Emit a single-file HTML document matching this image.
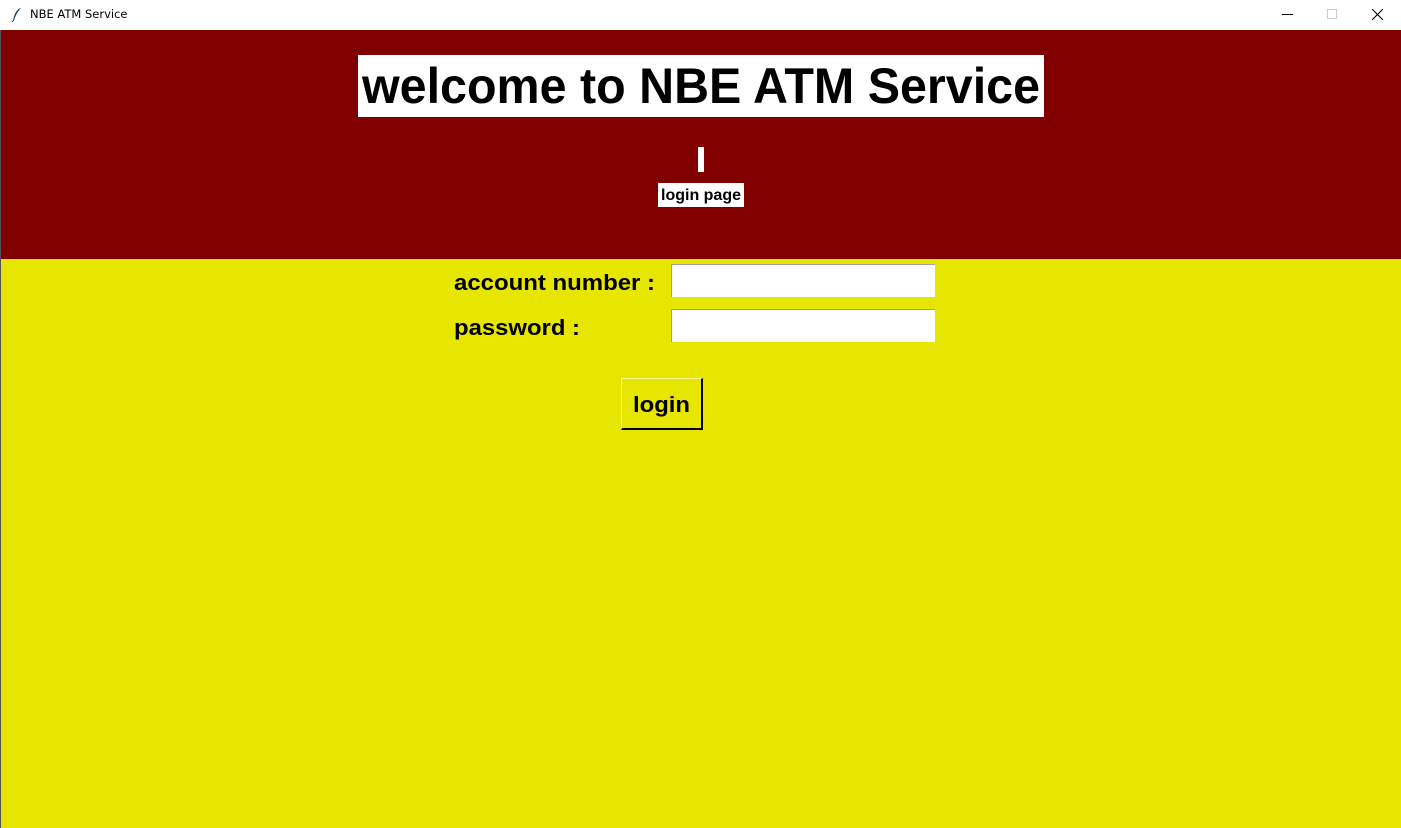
<!DOCTYPE html>
<html><head><meta charset="utf-8"><style>
*{margin:0;padding:0;box-sizing:border-box}
body{width:1401px;height:828px;overflow:hidden;background:#fff;font-family:"Liberation Sans",Arial,sans-serif;position:relative}
.abs{position:absolute}
</style></head><body>
<div class="abs" style="left:0;top:0;width:1401px;height:30px;background:#fff"></div>
<svg class="abs" style="left:11px;top:7px" width="12" height="16" viewBox="0 0 12 16"><path d="M10 1 C6 2 3 7 2 14 L3 14 C4 9 7 4 10 1Z" fill="#1a3a6a"/><path d="M2 14 L1 15" stroke="#333"/></svg>
<div class="abs" style="left:30px;top:7px;color:#000;font-family:'DejaVu Sans','Liberation Sans',sans-serif;font-size:11.5px">NBE ATM Service</div>
<div class="abs" style="left:1282px;top:14px;width:11px;height:1px;background:#000"></div>
<div class="abs" style="left:1327px;top:9px;width:10px;height:10px;border:1px solid #ccc"></div>
<svg class="abs" style="left:1372px;top:9px" width="11" height="11"><path d="M0 0L11 11M11 0L0 11" stroke="#000" stroke-width="1.1"/></svg>
<div class="abs" style="left:0;top:30px;width:1401px;height:229px;background:#800000"></div>
<div class="abs" style="left:0;top:259px;width:1401px;height:569px;background:#e6e600"></div>
<div class="abs" style="left:0;top:30px;width:1px;height:798px;background:#555"></div>
<div class="abs" style="left:358px;top:55px;width:686px;height:62px;background:#fff"></div>
<svg class="abs" style="left:358px;top:55px" width="686" height="62"><text x="4" y="48" font-family="Liberation Sans,Arial,sans-serif" font-weight="bold" font-size="50" textLength="678" lengthAdjust="spacingAndGlyphs">welcome to NBE ATM Service</text></svg>
<div class="abs" style="left:698px;top:147px;width:6px;height:25px;background:#fff"></div>
<div class="abs" style="left:658px;top:183px;width:86px;height:24px;background:#fff"></div>
<svg class="abs" style="left:658px;top:183px" width="86" height="24"><text x="3" y="17" font-family="Liberation Sans,Arial,sans-serif" font-weight="bold" font-size="16" textLength="80" lengthAdjust="spacingAndGlyphs">login page</text></svg>
<svg class="abs" style="left:454px;top:266px" width="210" height="80"><text x="0" y="24" font-family="Liberation Sans,Arial,sans-serif" font-weight="bold" font-size="22" textLength="201" lengthAdjust="spacingAndGlyphs">account number :</text><text x="0" y="69" font-family="Liberation Sans,Arial,sans-serif" font-weight="bold" font-size="22" textLength="126" lengthAdjust="spacingAndGlyphs">password :</text></svg>
<div class="abs" style="left:671px;top:264px;width:264px;height:33px;background:#fff;border-top:1px solid #a0a0a0;border-left:1px solid #a0a0a0"></div>
<div class="abs" style="left:671px;top:309px;width:264px;height:33px;background:#fff;border-top:1px solid #a0a0a0;border-left:1px solid #a0a0a0"></div>
<div class="abs" style="left:621px;top:378px;width:82px;height:52px;border-top:1px solid #fff8a0;border-left:1px solid #fff8a0;border-right:2px solid #000;border-bottom:2px solid #000"></div>
<svg class="abs" style="left:621px;top:378px" width="82" height="52"><text x="12" y="34" font-family="Liberation Sans,Arial,sans-serif" font-weight="bold" font-size="22" textLength="57" lengthAdjust="spacingAndGlyphs">login</text></svg>
</body></html>
